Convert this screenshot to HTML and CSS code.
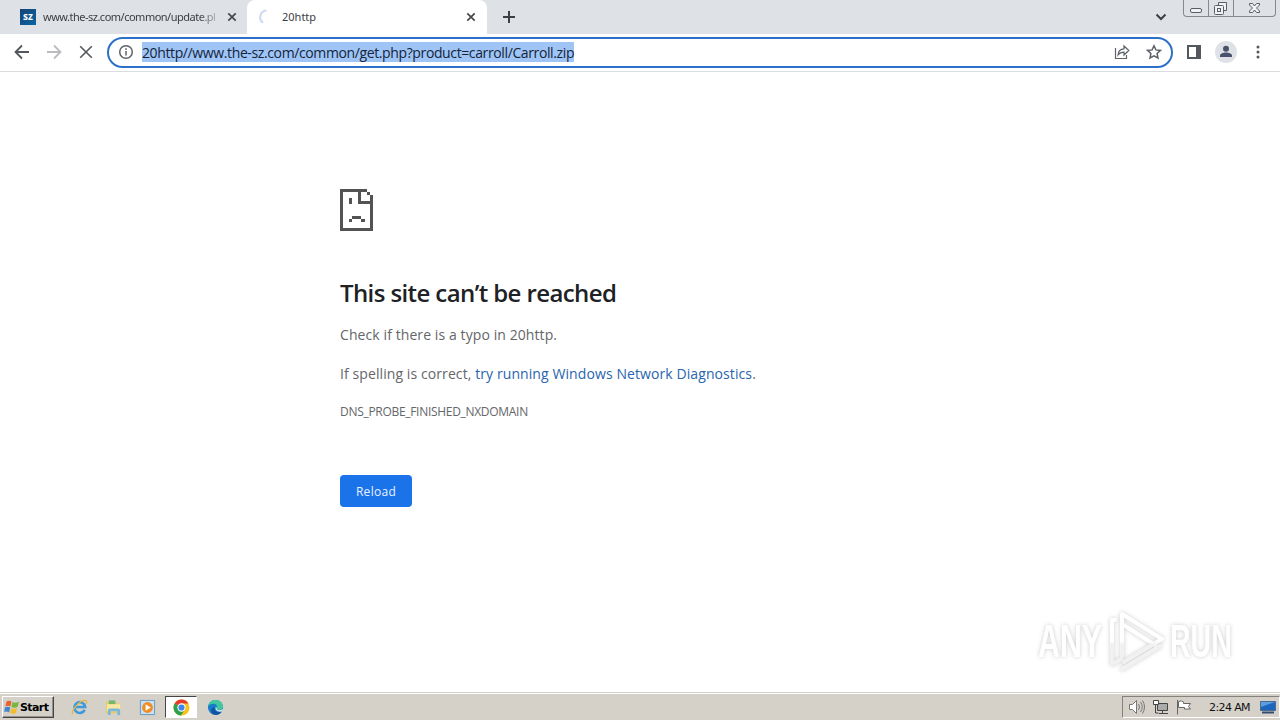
FILE: index.html
```html
<!DOCTYPE html>
<html lang="en">
<head>
  <meta charset="UTF-8" />
  <meta name="viewport" content="width=device-width, initial-scale=1" />
  <title>20http</title>
  <link rel="stylesheet" href="styles.css">
</head>
<body>
  <!-- Tab strip -->
  <header class="tab-strip">
    <div class="tab">
      <span class="favicon">sz</span>
      <span class="tab-title faded">www.the-sz.com/common/update.pl</span>
      <svg class="tab-close" viewBox="0 0 10 10"><path d="M1.3 1.3l7.4 7.4M8.7 1.3L1.3 8.7"/></svg>
    </div>
    <div class="tab active">
      <svg class="spinner" viewBox="0 0 16 16"><path d="M8.500 1.500a6.800 6.800 0 0 0-3.500 12.300"/></svg>
      <span class="tab-title">20http</span>
      <svg class="tab-close" viewBox="0 0 10 10"><path d="M1.3 1.3l7.4 7.4M8.7 1.3L1.3 8.7"/></svg>
    </div>
    <svg class="new-tab" viewBox="0 0 12 12"><path d="M6 0v12M0 6h12"/></svg>
    <svg class="tab-search" viewBox="0 0 12 8"><path d="M1.500 1.500L6 6l4.500-4.500"/></svg>
    <div class="window-buttons">
      <span><svg width="24" height="16" viewBox="0 0 24 16"><rect x="6.500" y="8.500" width="11" height="4" rx="1.500"/></svg></span>
      <span><svg width="24" height="16" viewBox="0 0 24 16"><path d="M9.500 5.500v-3h8v8h-3"/><rect x="5.500" y="5.500" width="9" height="9" rx="1"/><rect x="8.500" y="8.500" width="3" height="3"/></svg></span>
      <span><svg width="41" height="16" viewBox="0 0 41 16"><path d="M15.500 3.500h3l2 2.500 2-2.500h3v1.500L22.500 8l3 3v1.500h-3l-2-2.500-2 2.500h-3V11l3-3-3-3z"/></svg></span>
    </div>
  </header>

  <!-- Toolbar -->
  <nav class="toolbar">
    <svg class="nav-icon" viewBox="0 0 16 16"><path d="M15 8H2M8 1.500L1.500 8 8 14.500"/></svg>
    <svg class="nav-icon disabled" viewBox="0 0 16 16"><path d="M1 8h13M8 1.500L14.500 8 8 14.500"/></svg>
    <svg class="nav-icon stop" viewBox="0 0 16 16"><path d="M2.200 2.200l11.600 11.600M13.800 2.200L2.200 13.800"/></svg>
    <div class="omnibox">
      <svg class="info" viewBox="0 0 16 16"><circle cx="8" cy="8" r="6.300"/><path d="M8 7v4.500M8 4.300v1.600"/></svg>
      <span class="url">20http//www.the-sz.com/common/get.php?product=carroll/Carroll.zip</span>
      <svg class="share" viewBox="0 0 16 16"><path d="M1.500 4v10.500h11V11M4 11c.3-3.800 2.500-6 6-6.200V2l4.800 4.500L10 11V8.200C7.500 8.200 5.500 9 4 11z"/></svg>
      <svg class="star" viewBox="0 0 16 16"><path d="M8 1.800l1.900 4.100 4.500.5-3.300 3.100.9 4.500L8 11.800 4 14l.9-4.500L1.600 6.400l4.500-.5z"/></svg>
    </div>
    <svg class="side-panel" viewBox="0 0 14 14"><path fill-rule="evenodd" d="M0 0h14v14H0zM2 2v10h7V2z"/></svg>
    <svg class="avatar" viewBox="0 0 22 22"><circle cx="11" cy="11" r="11" fill="#dee1e6"/><circle cx="11" cy="7.800" r="3" fill="#49526b"/><path d="M5 16v-1.500c0-2 3.500-3 6-3s6 1 6 3V16z" fill="#49526b"/></svg>
    <svg class="menu" viewBox="0 0 4 14"><circle cx="2" cy="2" r="1.500"/><circle cx="2" cy="7" r="1.500"/><circle cx="2" cy="12" r="1.500"/></svg>
  </nav>

  <!-- Network error page -->
  <main class="error-page">
    <svg class="sad-icon" viewBox="0 0 33 42" shape-rendering="crispEdges">
      <path fill-rule="evenodd" d="M0 0h27v3h3v3h3v36H0zM3 3v36h27V15H18V3zM21 3v9h9V6h-3V3z"/>
      <path d="M9 9h3v6H9zM12 27h9v3h-9zM9 30h3v3H9zM21 30h4v3h-4z"/>
    </svg>
    <h1>This site can’t be reached</h1>
    <p class="typo">Check if there is a typo in 20http.</p>
    <p class="suggest">If spelling is correct, <a href="#">try running Windows Network Diagnostics</a>.</p>
    <p class="error-code">DNS_PROBE_FINISHED_NXDOMAIN</p>
    <button class="reload" type="button">Reload</button>

    <div class="watermark">
      <span class="any">ANY</span>
      <svg viewBox="0 0 58 62">
        <defs>
          <linearGradient id="fade" x1="0" y1="0" x2="0" y2="62" gradientUnits="userSpaceOnUse">
            <stop offset=".5" stop-color="#fff"/>
            <stop offset=".56" stop-color="#f1f1f1"/>
          </linearGradient>
        </defs>
        <path d="M15 46V4l40 25-38 23M15 14l33 21M8 10H5v44l9-5M15 59l38-23" stroke="url(#fade)"/>
      </svg>
      <span class="run">RUN</span>
    </div>
  </main>

  <!-- Taskbar -->
  <footer class="taskbar">
    <div class="start">
      <svg viewBox="0 0 16 16"><path d="M2.500 2.500Q5 1 7.500 2.500L6.500 7.500Q4 6 1.300 7.500z" fill="#e8642c"/><path d="M8.500 3Q11 4.500 15 2.700L13.500 8Q10.500 9.500 7.500 8z" fill="#76b83f"/><path d="M1 8.500Q3.500 7 6.300 8.500L5 13.500Q2.500 12 .2 13z" fill="#3f86cf"/><path d="M7.300 9Q10 10.500 13 9L12 14Q9 15.500 6 14z" fill="#f5bb2f"/></svg>
      <span>Start</span>
    </div>
    <div class="task"><svg viewBox="0 0 18 18"><path d="M14.500 11.500A5.700 5.700 0 1 1 15 8.500H5" fill="none" stroke="#3d9bdc" stroke-width="2.800"/><path d="M2 16C-1 13 11-1 16 2c1 .7.500 2 0 3" fill="none" stroke="#e7b943" stroke-width="1.500"/></svg></div>
    <div class="task"><svg viewBox="0 0 18 18"><path d="M1 3h6l1 1.500h8V15H1z" fill="#e9ca68"/><path d="M4 1.500h7V6H4z" fill="#74b66a"/><path d="M2 5.500h14V13H2z" fill="#f8e8a4"/><path d="M3 17v-5q0-2 2-2h9q2 0 2 2v5h-3v-4H6v4z" fill="#79b7db"/></svg></div>
    <div class="task"><svg viewBox="0 0 18 18"><path d="M1.500 1.500h15v15h-15z" fill="#c8e0f3" stroke="#6598bd"/><circle cx="9" cy="9" r="5.700" fill="#f28c22"/><path d="M7 5.500v7L12.500 9z" fill="#fff"/></svg></div>
    <div class="task pressed"><svg viewBox="0 0 16 16"><circle cx="8" cy="8" r="7.500" fill="#fbc116"/><path d="M8 8L1.500 4.200A7.500 7.500 0 0 1 14.500 4.200H8z" fill="#e33b2e"/><path d="M1.500 4.200A7.500 7.500 0 0 0 7.500 15.500L11.200 9.900 8 8z" fill="#2da04b"/><circle cx="8" cy="8" r="3.900" fill="#fff"/><circle cx="8" cy="8" r="2.900" fill="#4283ee"/></svg></div>
    <div class="task"><svg viewBox="0 0 18 18"><circle cx="9" cy="9" r="8" fill="#177dc8"/><path d="M1.200 7.500C2 2.800 5.500 1 9 1c5 0 8 3.500 8 7 0 3-2.500 4-4.500 4-2.500 0-2.500-1-2-2 1-3-1-5-4-5-2.500 0-4.500 1-5.300 2.500z" fill="#42c6a0"/><path d="M8 8.500c-1 4 3 6.500 7.500 5-3 4.500-8.500 3.800-10.500 1C3.500 12 5 9 8 8.500z" fill="#1253a0"/><path d="M10.700 9c-1 1.500-.3 3 1.800 3 2 0 3.500-.5 4.500-1.500L16 13c-4 1.300-7.500-1-7-4z" fill="#e8edf0"/></svg></div>

    <div class="tray">
      <svg viewBox="0 0 18 16"><path d="M1.500 5.500h3l4-4v13l-4-4h-3z" fill="#fff" stroke="#777"/><path d="M10.500 5q2 3 0 6M12.500 3q3.500 5 0 10M14.500 1.500q4 6.500 0 13" fill="none" stroke="#777"/></svg>
      <svg viewBox="0 0 18 16"><path d="M5.500 4.500h10v7h-10z" fill="#aaa" stroke="#444"/><path d="M7 14.500h9M10.500 12v2M1.500 1.500h5v4h-5zM3.500 6v8h3" fill="none" stroke="#444"/><path d="M2 2h4v3H2z" fill="#fff"/></svg>
      <svg viewBox="0 0 18 16"><path d="M1.500 1v14.500" stroke="#666" fill="none"/><path d="M2.500 2.500q3-1.500 5 .5v1.500h7l-2 3 2 2.500h-6V8.500h-6z" fill="#fff" stroke="#666"/></svg>
      <span class="clock">2:24 AM</span>
      <svg class="desktop" viewBox="0 0 16 16"><path d="M.5 2.500h15v9H.5z" fill="#1b66bc" stroke="#4b6b91"/><path d="M1 3h14L1 8z" fill="#5a9ede"/><path d="M2 13.500h12" stroke="#344c71" stroke-width="2"/></svg>
    </div>
  </footer>
</body>
</html>
```
FILE: styles.css
```css
/* Reset and base */
* {
  box-sizing: border-box;
}

body {
  margin: 0;
  height: 100vh;
  display: flex;
  flex-direction: column;
  overflow: hidden;
  background: #fff;
  font-family: "Open Sans", "Noto Sans", sans-serif;
}

svg {
  display: block;
  flex: none;
}

/* Tab strip */
.tab-strip {
  height: 34px;
  flex: none;
  display: flex;
  align-items: flex-start;
  background: #dee1e6;
}

.tab {
  display: flex;
  align-items: center;
  width: 247px;
  height: 34px;
  padding: 0 10px 0 20px;
}

.tab.active {
  width: 240px;
  padding: 0 11px;
  background: #fff;
  border-radius: 8px 8px 0 0;
}

.favicon {
  width: 16px;
  height: 16px;
  background: linear-gradient(135deg, #174274, #0865a4);
  color: #fff;
  font-size: 10px;
  font-weight: 700;
  line-height: 14px;
  text-align: center;
}

.tab-title {
  flex: 1;
  margin-left: 8px;
  white-space: nowrap;
  font-family: "Noto Sans", sans-serif;
  font-size: 11px;
  line-height: 18px;
  color: #3c4043;
}

.faded {
  flex: none;
  width: 176px;
  margin-left: 7px;
  letter-spacing: -0.5px;
  -webkit-mask-image: linear-gradient(to right, #000 156px, transparent 180px);
  mask-image: linear-gradient(to right, #000 156px, transparent 180px);
}

.spinner {
  width: 16px;
  height: 16px;
  fill: none;
  stroke: #ccd9f3;
  stroke-width: 2;
}

.tab-close {
  width: 10px;
  height: 10px;
  margin-left: auto;
  stroke: #45494d;
  stroke-width: 1.7;
}

.new-tab {
  width: 12px;
  height: 12px;
  margin: 11px 0 0 16px;
  stroke: #3c4043;
  stroke-width: 2;
}

.tab-search {
  width: 12px;
  height: 8px;
  margin: 13px 16px 0 auto;
  fill: none;
  stroke: #3c4043;
  stroke-width: 2;
}

.window-buttons {
  display: flex;
  height: 17px;
  margin-right: 4px;
  border: 1px solid #85888d;
  border-top: 0;
  border-radius: 0 0 4px 4px;
}

.window-buttons span + span {
  border-left: 1px solid #85888d;
}

.window-buttons svg {
  fill: #f1f2f4;
  stroke: #5b5e64;
}

/* Toolbar */
.toolbar {
  height: 38px;
  flex: none;
  display: flex;
  align-items: center;
  padding: 0 20px 1px 14px;
  border-bottom: 1px solid #dadce0;
}

.nav-icon {
  width: 16px;
  height: 16px;
  margin-right: 16px;
  fill: none;
  stroke: #54585d;
  stroke-width: 1.8;
}

.nav-icon.disabled {
  stroke: #b9bbbe;
}

.nav-icon.stop {
  margin-right: 13px;
  stroke-width: 1.6;
}

.omnibox {
  display: flex;
  align-items: center;
  width: 1066px;
  height: 31px;
  padding: 0 9px;
  border: 2px solid #2d70c9;
  border-radius: 16px;
}

.info {
  width: 16px;
  height: 16px;
  fill: none;
  stroke: #5f6368;
  stroke-width: 1.5;
}

.url {
  margin-left: 8px;
  height: 20px;
  background: #9fc4f6;
  color: #14243a;
  font-size: 14px;
  line-height: 21px;
  white-space: nowrap;
  letter-spacing: -0.38px;
}

.share,
.star {
  width: 16px;
  height: 16px;
  fill: none;
  stroke: #5f6368;
  stroke-width: 1.2;
}

.share {
  margin-left: auto;
}

.star {
  margin-left: 16px;
  stroke-width: 1.5;
}

.side-panel {
  width: 14px;
  height: 14px;
  margin-left: 14px;
  fill: #54585d;
}

.avatar {
  width: 22px;
  height: 22px;
  margin-left: 14px;
}

.menu {
  width: 4px;
  height: 14px;
  margin-left: 19px;
  fill: #54585d;
}

/* Error page */
.error-page {
  position: relative;
  flex: 1;
  padding: 117px 0 0 340px;
  color: #646669;
}

.error-page h1 {
  margin: 46px 0 0;
  color: #202124;
  font-size: 24px;
  font-weight: 600;
  line-height: 32px;
  letter-spacing: -0.6px;
  white-space: nowrap;
}

.error-page p {
  margin: 0;
  font-size: 14px;
  line-height: 20px;
  letter-spacing: 0.09px;
  white-space: nowrap;
}

.sad-icon {
  width: 33px;
  height: 42px;
  fill: #535353;
}

.error-page .typo {
  margin-top: 16px;
}

.error-page .suggest {
  margin-top: 19px;
}

.suggest a {
  color: #2865ae;
  text-decoration: none;
}

.error-page .error-code {
  margin-top: 18px;
  font-size: 12px;
  letter-spacing: -0.3px;
}

.reload {
  display: block;
  width: 72px;
  height: 32px;
  margin-top: 53px;
  padding: 0;
  border: 0;
  border-radius: 4px;
  background: #1a73e8;
  color: #e9f2ff;
  font-family: inherit;
  font-size: 12px;
  letter-spacing: 0.3px;
}

/* Watermark */
.watermark {
  position: absolute;
  left: 1038px;
  top: 538px;
  display: flex;
  align-items: center;
  font-family: "Liberation Sans", sans-serif;
  font-size: 46px;
  font-weight: 700;
  line-height: 62px;
  filter: drop-shadow(0 0 2px #ccc);
}

.watermark span {
  width: 66px;
  color: #fff;
  transform: scaleX(0.66);
  transform-origin: left;
}

.watermark .run {
  width: 62px;
  transform: scaleX(0.62);
}

.watermark svg {
  width: 58px;
  height: 62px;
  margin: 0 5px 0 3px;
  fill: none;
  stroke-width: 4;
  stroke-linejoin: round;
  stroke-linecap: round;
}

/* Taskbar */
.taskbar {
  display: flex;
  align-items: center;
  flex: none;
  height: 28px;
  padding: 2px 0 1px 2px;
  background: #d5d1c9;
  border-top: 1px solid #d5d1c9;
  box-shadow: inset 0 1px #fff;
  font-family: "DejaVu Sans", sans-serif;
}

.start {
  display: flex;
  align-items: center;
  width: 52px;
  height: 22px;
  margin-right: 9px;
  padding-left: 1px;
  border: 1px solid;
  border-color: #fff #454545 #454545 #fff;
  box-shadow: inset -1px -1px #96938d;
  color: #000;
  font-size: 11px;
  font-weight: 700;
  letter-spacing: -0.6px;
}

.start svg {
  width: 16px;
  height: 16px;
}

.task {
  display: flex;
  align-items: center;
  justify-content: center;
  width: 32px;
  height: 22px;
  margin-right: 2px;
}

.task svg {
  width: 17px;
  height: 17px;
}

.pressed {
  background: #fff;
  border: 1px solid;
  border-color: #464646 #fff #fff #464646;
}

.tray {
  display: flex;
  align-items: center;
  width: 158px;
  height: 22px;
  margin-left: auto;
  padding-left: 5px;
  border: 1px solid;
  border-color: #85827c #fff #fff #85827c;
}

.tray svg {
  width: 18px;
  height: 16px;
  margin-right: 6px;
}

.clock {
  width: 49px;
  margin-left: 9px;
  color: #111;
  font-size: 11px;
  letter-spacing: -0.6px;
  white-space: nowrap;
}

.tray .desktop {
  width: 16px;
  margin: 0 0 0 2px;
}
```
